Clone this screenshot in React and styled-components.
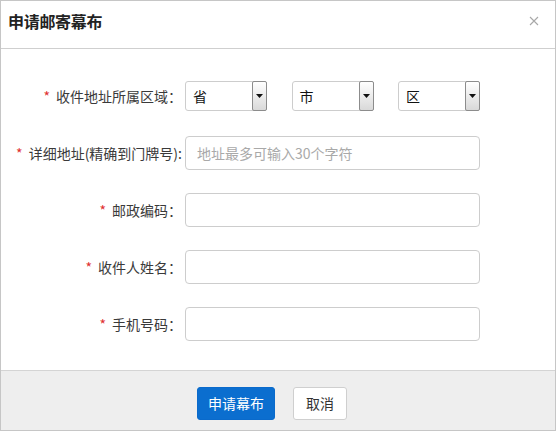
import React from "react";
import styled, { createGlobalStyle } from "styled-components";

const Global = createGlobalStyle`
  html, body { margin: 0; padding: 0; background: #fff; }
  body { font-family: "Noto Sans CJK SC", "Noto Sans", sans-serif; }
  * { box-sizing: border-box; }
`;

const Dialog = styled.div`
  width: 556px;
  height: 431px;
  border: 1px solid #c6c6c6;
  display: flex;
  flex-direction: column;
  background: #fff;
`;

const Header = styled.div`
  height: 48px;
  flex: none;
  border-bottom: 1px solid #cfcfcf;
  display: flex;
  align-items: flex-start;
  justify-content: space-between;
  padding: 8px 16px 0 7px;
`;

const Title = styled.div`
  font-size: 16px;
  line-height: 24px;
  font-weight: 700;
  color: #222;
  letter-spacing: -0.3px;
`;

const Close = styled.button`
  border: none;
  background: none;
  padding: 0;
  margin-top: 7px;
  width: 10px;
  height: 10px;
  display: flex;
  cursor: pointer;
`;

const Body = styled.div`
  flex: 1;
  display: flex;
  flex-direction: column;
  gap: 23px;
  padding-top: 30px;
`;

const Row = styled.div`
  display: flex;
  align-items: center;
  height: 34px;
`;

const Label = styled.div`
  width: 181px;
  flex: none;
  text-align: right;
  font-size: 14px;
  color: #3a3a3a;
  white-space: nowrap;
  margin-right: 3px;
`;

const Star = styled.span`
  color: #e03030;
  margin-right: 6px;
`;

const SelectGroup = styled.div`
  width: 295px;
  display: flex;
  justify-content: space-between;
`;

const Select = styled.div`
  width: 82px;
  height: 30px;
  border: 1px solid #cdcdcd;
  border-radius: 3px;
  display: flex;
  align-items: center;
  background: #fff;
`;

const SelectText = styled.span`
  flex: 1;
  padding-left: 7px;
  font-size: 14px;
  color: #111;
`;

const ArrowBox = styled.span`
  width: 15px;
  align-self: stretch;
  margin: -1px -1px -1px 0;
  border: 1px solid #8c8c8c;
  border-radius: 2px;
  background: linear-gradient(#ffffff, #d9d9d9);
  display: flex;
  align-items: center;
  justify-content: center;
`;

const Input = styled.input`
  width: 295px;
  height: 34px;
  border: 1px solid #cdcdcd;
  border-radius: 4px;
  padding: 0 11px;
  font-size: 14px;
  font-family: inherit;
  color: #333;
  outline: none;
  &::placeholder { color: #a9a9a9; }
`;

const Footer = styled.div`
  height: 60px;
  flex: none;
  border-top: 1px solid #d4d4d4;
  background: #eeeeee;
  display: flex;
  align-items: center;
  gap: 18px;
  padding: 5px 0 0 196px;
`;

const Button = styled.button`
  height: 33px;
  padding: 0 ${(p) => (p.$primary ? "10px" : "12px")};
  border-radius: 3px;
  font-size: 14px;
  font-family: inherit;
  cursor: pointer;
  border: 1px solid ${(p) => (p.$primary ? "#0a6acb" : "#cfcfcf")};
  background: ${(p) => (p.$primary ? "#0b6ecf" : "#fff")};
  color: ${(p) => (p.$primary ? "#fff" : "#333")};
`;

const Arrow = () => (
  <svg width="7" height="4" viewBox="0 0 7 4">
    <path d="M0 0H7L3.5 4Z" fill="#111" />
  </svg>
);

const Sel = ({ text }) => (
  <Select>
    <SelectText>{text}</SelectText>
    <ArrowBox>
      <Arrow />
    </ArrowBox>
  </Select>
);

const Field = ({ label, children }) => (
  <Row>
    <Label>
      <Star>*</Star>
      {label}
    </Label>
    {children}
  </Row>
);

export default function App() {
  return (
    <>
      <Global />
      <Dialog>
        <Header>
          <Title>申请邮寄幕布</Title>
          <Close aria-label="close">
            <svg width="10" height="10" viewBox="0 0 10 10">
              <path d="M1 1L9 9M9 1L1 9" stroke="#a8a8a8" strokeWidth="1.1" />
            </svg>
          </Close>
        </Header>
        <Body>
          <Field label="收件地址所属区域：">
            <SelectGroup>
              <Sel text="省" />
              <Sel text="市" />
              <Sel text="区" />
            </SelectGroup>
          </Field>
          <Field label="详细地址(精确到门牌号):">
            <Input placeholder="地址最多可输入30个字符" />
          </Field>
          <Field label="邮政编码：">
            <Input />
          </Field>
          <Field label="收件人姓名：">
            <Input />
          </Field>
          <Field label="手机号码：">
            <Input />
          </Field>
        </Body>
        <Footer>
          <Button $primary>申请幕布</Button>
          <Button>取消</Button>
        </Footer>
      </Dialog>
    </>
  );
}
